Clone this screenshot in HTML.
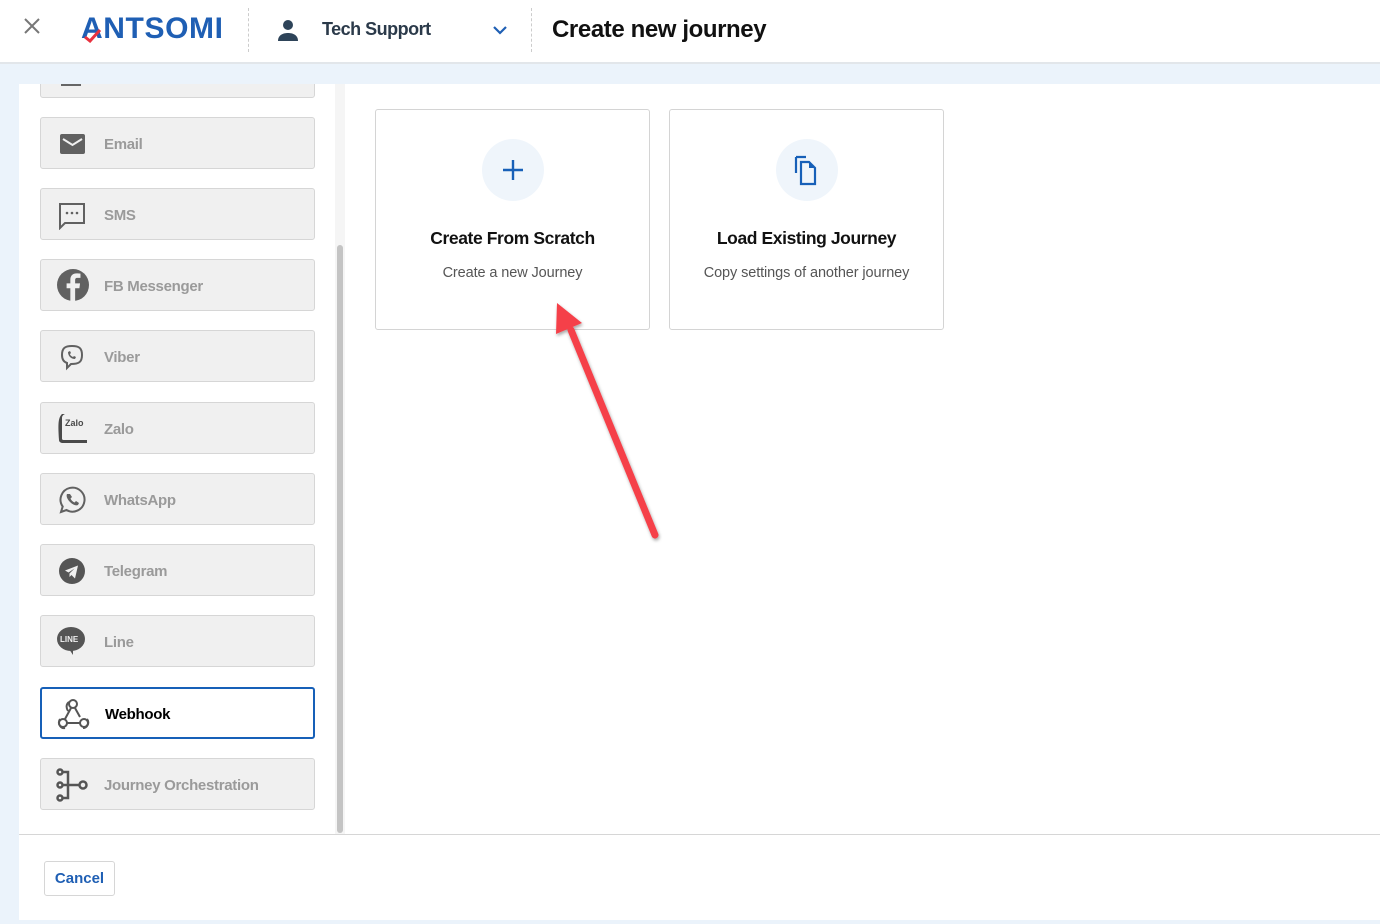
<!DOCTYPE html>
<html><head><meta charset="utf-8">
<style>
*{box-sizing:border-box;margin:0;padding:0}
body{width:1380px;height:924px;overflow:hidden;background:#ebf3fb;font-family:"Liberation Sans",sans-serif;position:relative}
.hdr{position:absolute;left:0;top:0;width:1380px;height:64px;background:#fff;border-bottom:2px solid #e2e6ea}
.panel{position:absolute;left:19px;top:84px;width:1361px;height:836px;background:#fff}
.list{position:absolute;left:0;top:84px;width:335px;height:750px;overflow:hidden}
.item{position:absolute;left:40px;width:275px;height:52px;background:#f0f0f0;border:1px solid #d6d6d6;border-radius:3px}
.item .lbl{position:absolute;left:63px;top:2px;line-height:50px;font-size:15px;font-weight:bold;color:#9a9a9a;letter-spacing:-0.3px}
.item svg{position:absolute;left:16px;top:11px}
.card{position:absolute;top:109px;width:275px;height:221px;border:1px solid #d4d4d4;border-radius:3px;background:#fff;text-align:center}
.circ{position:absolute;left:106px;top:29px;width:62px;height:62px;border-radius:50%;background:#eff5fb}
.card h3{position:absolute;left:0;right:0;top:118px;font-size:17.5px;color:#111;letter-spacing:-0.4px}
.card p{position:absolute;left:0;right:0;top:155px;font-size:14.5px;color:#555;letter-spacing:-0.1px}
</style></head><body>
<div class="hdr">
 <svg style="position:absolute;left:23px;top:17px" width="18" height="18" viewBox="0 0 18 18"><path d="M2 2L16 16M16 2L2 16" stroke="#777" stroke-width="2"/></svg>
 <div style="position:absolute;left:81px;top:12px;font-size:30px;color:#1f5fb4;font-weight:bold;letter-spacing:0.6px">
  <span style="position:relative">A<svg style="position:absolute;left:3px;top:17px" width="18" height="14" viewBox="0 0 18 14"><path d="M1 8L6 12L16 1" stroke="#e8323f" stroke-width="3" fill="none"/></svg></span>NTSOMI</div>
 <div style="position:absolute;left:248px;top:8px;height:44px;border-left:1px dashed #ccc"></div>
 <svg style="position:absolute;left:276px;top:18px" width="24" height="24" viewBox="0 0 24 24"><circle cx="12" cy="7" r="5" fill="#2e4459"/><path d="M2 23c0-6 5-8 10-8s10 2 10 8z" fill="#2e4459"/></svg>
 <div style="position:absolute;left:322px;top:19px;font-size:18px;color:#2b3a4a;font-weight:bold;letter-spacing:-0.5px">Tech Support</div>
 <svg style="position:absolute;left:492px;top:24px" width="16" height="12" viewBox="0 0 16 12"><path d="M2 3L8 9L14 3" stroke="#1f5fb4" stroke-width="2.2" fill="none"/></svg>
 <div style="position:absolute;left:531px;top:8px;height:44px;border-left:1px dashed #ccc"></div>
 <div style="position:absolute;left:552px;top:16px;font-size:24px;color:#111;font-weight:bold;letter-spacing:-0.4px">Create new journey</div>
</div>
<div class="panel"></div>
<div style="position:absolute;left:335px;top:84px;width:10px;height:751px;background:#f5f5f5"></div>
<div style="position:absolute;left:337px;top:245px;width:6px;height:588px;background:#c4c4c4;border-radius:3px"></div>
<div style="position:absolute;left:19px;top:834px;width:1361px;height:1px;background:#d6d6d6"></div>
<div style="position:absolute;left:44px;top:861px;width:71px;height:35px;border:1px solid #d6d6d6;border-radius:3px;text-align:center;line-height:33px;font-size:15px;font-weight:bold;color:#1f5fb4">Cancel</div>

<div class="list">
<div class="item" style="top:-38px"><svg width="30" height="30" viewBox="0 0 30 30"><rect x="4" y="24" width="20" height="4" fill="#666"/></svg></div>
<div class="item" style="top:33px"><svg width="30" height="30" viewBox="0 0 30 30"><rect x="3" y="5" width="25" height="20" rx="2" fill="#616161"/><path d="M6 10l9.5 6 9.5-6" stroke="#f0f0f0" stroke-width="2" fill="none"/></svg><span class="lbl">Email</span></div>
<div class="item" style="top:104px"><svg width="30" height="30" viewBox="0 0 30 30"><path d="M3 4h24v19H8l-5 5z" stroke="#616161" stroke-width="2" fill="none"/><circle cx="10" cy="13" r="1.3" fill="#616161"/><circle cx="15" cy="13" r="1.3" fill="#616161"/><circle cx="20" cy="13" r="1.3" fill="#616161"/></svg><span class="lbl">SMS</span></div>
<div class="item" style="top:175px"><svg width="32" height="32" viewBox="0 0 30 30" style="top:9px"><circle cx="15" cy="15" r="15" fill="#616161"/><path d="M17 30V18h4l.6-4.5H17v-3c0-1.3.4-2.2 2.2-2.2H22V4.3c-.5 0-2-.2-3.6-.2-3.5 0-5.9 2.1-5.9 6v3.4H9V18h3.5v12z" fill="#f0f0f0"/></svg><span class="lbl">FB Messenger</span></div>
<div class="item" style="top:246px"><svg width="30" height="30" viewBox="0 0 30 30"><path d="M15 4c-7 0-10 2-10 9 0 5 2 7 5 8v5l4-4c8 0 11-2 11-9s-3-9-10-9z" stroke="#616161" stroke-width="2" fill="none"/><path d="M11 10c0 4 3 7 7 7l1-2-2-1-1 1c-2-1-3-2-3-3l1-1-1-2z" fill="#616161"/></svg><span class="lbl">Viber</span></div>
<div class="item" style="top:318px"><svg width="32" height="32" viewBox="0 0 32 32" style="top:9px;left:15px"><path d="M6 2C2 6 2 12 3 28c0 2 2 3 4 3h24v-3H8c-2 0-2-1-2-2V6c0-2 1-3 3-4z" fill="#4a4a4a"/><text x="9" y="14" font-size="9" font-weight="bold" fill="#4a4a4a" font-family="Liberation Sans">Zalo</text></svg><span class="lbl">Zalo</span></div>
<div class="item" style="top:389px"><svg width="30" height="30" viewBox="0 0 30 30"><path d="M4 27l1.7-5.5A12 12 0 1 1 9.5 25z" stroke="#616161" stroke-width="2" fill="none"/><path d="M10 9c-1 2 0 5 3 8s6 4 8 3l1-2-3-2-1.5 1.5c-2-1-3-2-4-4L15 12l-2-3z" fill="#616161"/></svg><span class="lbl">WhatsApp</span></div>
<div class="item" style="top:460px"><svg width="30" height="30" viewBox="0 0 30 30"><circle cx="15" cy="15" r="13" fill="#555"/><path d="M8 14.5l13-5-3 13-3.5-3.5-2 2v-3.5l5-5-6 4z" fill="#f0f0f0"/></svg><span class="lbl">Telegram</span></div>
<div class="item" style="top:531px"><svg width="32" height="32" viewBox="0 0 32 32" style="left:14px;top:9px"><ellipse cx="16" cy="14" rx="14" ry="12" fill="#555"/><path d="M14 24l4 6 0-6z" fill="#555"/><text x="5" y="17" font-size="8" font-weight="bold" fill="#f0f0f0" font-family="Liberation Sans">LINE</text></svg><span class="lbl">Line</span></div>
<div class="item" style="top:603px;background:#fff;border:2px solid #1760b8"><svg width="34" height="34" viewBox="0 0 34 34" style="left:14px;top:8px"><g stroke="#555" stroke-width="2" fill="none"><circle cx="17" cy="7" r="4"/><circle cx="7" cy="26" r="4"/><circle cx="28" cy="26" r="4"/><path d="M15 11l-6 11M19 11l5 9M11 26h13M13 5c-3 2-3 6-1 9M4 22c-3 5 1 10 5 9M31 22c3 4 0 9-4 9"/></g></svg><span class="lbl" style="color:#000;left:63px;line-height:48px">Webhook</span></div>
<div class="item" style="top:674px"><svg width="34" height="34" viewBox="0 0 34 34" style="left:14px;top:9px"><g stroke="#555" stroke-width="2.5" fill="none"><circle cx="5" cy="4" r="2.5"/><circle cx="5" cy="17" r="2.5"/><circle cx="5" cy="30" r="2.5"/><circle cx="28" cy="17" r="3.5"/><path d="M7 4h6v26H7M7 17h17"/></g></svg><span class="lbl">Journey Orchestration</span></div>
</div>

<div class="card" style="left:375px"><div class="circ"><svg style="position:absolute;left:20px;top:20px" width="22" height="22" viewBox="0 0 22 22"><path d="M11 1v20M1 11h20" stroke="#1760b8" stroke-width="2.4"/></svg></div><h3>Create From Scratch</h3><p>Create a new Journey</p></div>
<div class="card" style="left:669px"><div class="circ"><svg style="position:absolute;left:17px;top:15px" width="28" height="32" viewBox="0 0 28 32"><path d="M3 3v16M3 3h10" stroke="#1760b8" stroke-width="2.2" fill="none"/><path d="M8 8h8l6 6v16H8z" stroke="#1760b8" stroke-width="2.2" fill="none"/><path d="M16 8v6h6z" fill="#1760b8"/></svg></div><h3>Load Existing Journey</h3><p>Copy settings of another journey</p></div>

<svg style="position:absolute;left:0;top:0" width="1380" height="924"><defs><filter id="s"><feDropShadow dx="1" dy="2" stdDeviation="1.5" flood-opacity="0.35"/></filter></defs><g filter="url(#s)"><path d="M571 330L655 535" stroke="#f5414a" stroke-width="7" stroke-linecap="round"/><path d="M557 303L582 323L556 334z" fill="#f5414a"/></g></svg>
</body></html>
